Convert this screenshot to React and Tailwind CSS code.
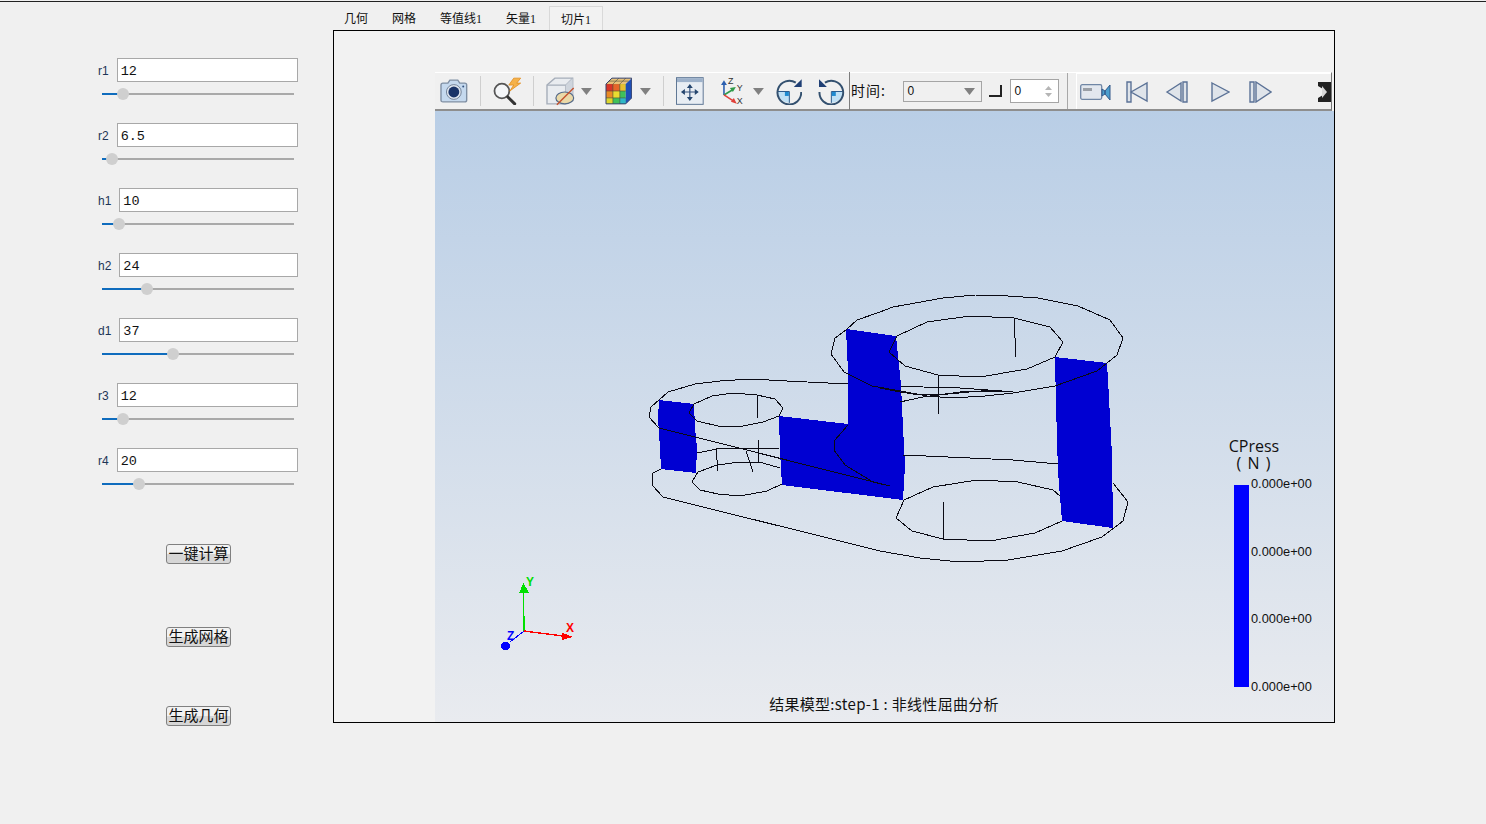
const params = [
  { label: 'r1', value: '12', pos: 21 },
  { label: 'r2', value: '6.5', pos: 10 },
  { label: 'h1', value: '10', pos: 17 },
  { label: 'h2', value: '24', pos: 45 },
  { label: 'd1', value: '37', pos: 71 },
  { label: 'r3', value: '12', pos: 21 },
  { label: 'r4', value: '20', pos: 37 },
]

const tabs = ['几何', '网格', '等值线1', '矢量1', '切片1']

const outlines = [
  // upper ring, outer
  '848,374 872,386 901,391 927,396 952,398 985,396 1013,393 1055,386 1097,371 1107,363 1117,355 1123,338 1110,320 1078,306 1038,298 1008,296 975,295 943,298 893,307 880,312 857,320 846,330 835,338 831,354 844,372 848,374',
  // upper ring, inner
  '897,336 889,352 905,366 938,375 980,377 1027,369 1055,357 1063,342 1050,327 1014,318 970,316 927,322 897,336',
  '1014,318 1016,357',
  '938,375 939,414',
  '901,386 923,387 960,388 1002,391',
  '880,388 900,392 913,394 938,395 980,391 1013,392',
  '900,402 923,397 960,392 1002,390',
  '903,455 948,457 1013,460 1058,464',
  // lower ring
  '904,500 896,518 912,531 943,539 990,541 1035,533 1062,521',
  '904,500 933,487 977,480 1018,482 1053,490 1060,496',
  '943,501 944,539',
  '1113,483 1128,502 1123,521 1102,537 1062,551 1008,560 960,562 920,558 880,551 663,497 652,485 653,473 661,469',
  // small boss
  '659,400 651,407 649,417 659,428 890,486',
  '659,400 668,392 695,384 720,381 750,379 787,381 848,384',
  '694,404 689,413 697,421 722,427 743,426 763,422 779,416 783,408 775,399 757,395 733,393 712,396 694,404',
  '757,395 757,418',
  '692,482 700,490 718,494 740,496 767,491 782,484',
  '692,482 698,472 717,465 740,462 763,463 780,468',
  '697,453 717,449 747,448 779,449',
  '716,448 718,471',
  '758,440 759,463',
  '746,451 753,472',
  '848,425 835,440 834,450 845,465 873,482 890,486',
]

const sections = [
  '659,400 694,404 695,428 697,448 696,473 661,469 660,448 658,418',
  '779,416 848,424 848,372 846,329 896,336 901,385 903,428 905,465 903,500 782,485 780,452',
  '1055,357 1107,363 1109,398 1112,455 1113,528 1062,521 1058,472 1056,405',
]

function ParamRow({ label, value, pos }) {
  return (
    <div className="flex flex-col">
      <div className="flex items-center gap-2">
        <span className="mt-[2px] text-[12px] leading-none text-[#1d3557] font-['Liberation_Sans',sans-serif]">{label}</span>
        <input
          readOnly
          value={value}
          className="h-6 flex-1 min-w-0 border border-[#a8a8a8] bg-white pl-[3px] pt-[2px] text-[13.5px] text-[#111] outline-none font-['Liberation_Mono',monospace]"
        />
      </div>
      <div className="relative ml-1 mt-[6px] flex h-3 w-[192px] items-center">
        <div className="h-[2px] w-full bg-[#a9a9a9]" />
        <div className="absolute left-0 h-[2px] bg-[#0f6cbd]" style={{ width: pos }} />
        <div className="absolute h-3 w-3 rounded-full bg-[#cfcfcf]" style={{ left: pos - 6 }} />
      </div>
    </div>
  )
}

function ActionButton({ children, className }) {
  return (
    <button className={`flex h-5 w-[65px] items-center justify-center rounded-[3px] border border-[#808080] bg-[linear-gradient(#f2f2f2_50%,#d6d6d6_50%)] pb-[3px] text-[15px] leading-none whitespace-nowrap text-[#111] font-['Noto_Sans_CJK_SC',sans-serif] ${className}`}>
      {children}
    </button>
  )
}

function Sep({ className }) {
  return <div className={`h-[30px] w-px bg-[#cfcfcf] ${className}`} />
}

function Caret({ className }) {
  return (
    <svg width="11" height="7" viewBox="0 0 11 7" className={className}>
      <path d="M0 0H11L5.5 7Z" fill="#808080" />
    </svg>
  )
}

function CameraIcon() {
  return (
    <svg width="28" height="24" viewBox="0 0 28 24" className="ml-[5px]">
      <path d="M1 6Q1 4 3 4H8L10 1H18L20 4H25Q27 4 27 6V21Q27 23 25 23H3Q1 23 1 21Z" fill="#c5d9ee" stroke="#7f8fa3" strokeWidth="1.4" />
      <circle cx="14" cy="13" r="7.5" fill="#dfe6ee" stroke="#75859a" />
      <circle cx="14" cy="13" r="5.5" fill="#1a3468" />
      <circle cx="23.5" cy="7.5" r="1" fill="#33527f" />
    </svg>
  )
}

function ZoomBoltIcon() {
  return (
    <svg width="30" height="28" viewBox="0 0 30 28" className="ml-3">
      <circle cx="9" cy="14" r="7.5" fill="#f4f6f8" stroke="#555" strokeWidth="1.8" />
      <path d="M15 20L22 27" stroke="#333" strokeWidth="3" strokeLinecap="round" />
      <path d="M21 1H28L24 6H28L17 14L21 8H16Z" fill="#f5b24a" stroke="#e08a1a" strokeWidth=".8" />
    </svg>
  )
}

function ClipCubeIcon() {
  return (
    <svg width="32" height="29" viewBox="0 0 32 29" className="ml-3">
      <path d="M1 8L9 1H27V20L20 27H1Z" fill="#e9ecf0" stroke="#a5adb9" strokeWidth="1.4" />
      <path d="M1 8H20V27M20 8L27 1" fill="none" stroke="#a5adb9" strokeWidth="1.2" />
      <path d="M20 8L27 1V20L20 27Z" fill="#cfd5dd" />
      <ellipse cx="19" cy="21" rx="9" ry="6" fill="#ead9a8" stroke="#556a88" strokeWidth="1.2" />
      <path d="M11 28L28 11" stroke="#c4502c" strokeWidth="1.4" />
    </svg>
  )
}

function ColorCubeIcon() {
  return (
    <svg width="28" height="28" viewBox="0 0 28 28" className="ml-[13px]">
      <path d="M7 1H27L21 7H1Z" fill="#e8c27a" />
      <path d="M1 7H21V27H1Z" fill="#3fc05a" />
      <path d="M1 7H8V14H1Z" fill="#d8352a" />
      <path d="M8 7H15V14H8Z" fill="#e6662a" />
      <path d="M15 7H21V14H15Z" fill="#e9c02f" />
      <path d="M1 14H8V21H1Z" fill="#ea8a25" />
      <path d="M8 14H15V21H8Z" fill="#e9dc30" />
      <path d="M1 21H8V27H1Z" fill="#dcd62f" />
      <path d="M15 21H21V27H15Z" fill="#2fb7c7" />
      <path d="M21 7L27 1V21L21 27Z" fill="#1f4fb5" />
      <path d="M8 7V27M15 7V27M1 14H21M1 21H21M7 1L1 7M14 1L8 7M21 1L15 7M4 4H24" stroke="#4c4c3c" strokeWidth=".6" fill="none" />
      <path d="M7 1H27V21L21 27H1V7Z" fill="none" stroke="#33406b" strokeWidth="1" />
    </svg>
  )
}

function FitIcon() {
  return (
    <svg width="28" height="28" viewBox="0 0 28 28" className="ml-3">
      <rect x=".5" y=".5" width="27" height="27" fill="#e8edf3" stroke="#5f7795" />
      <rect x="1" y="1" width="26" height="4" fill="#9db1ca" />
      <path d="M14 8V23M7 15H21" stroke="#33517c" strokeWidth="1.2" />
      <path d="M14 7L11 11H17ZM14 24L11 20H17ZM5 15L9 12V18ZM23 15L19 12V18Z" fill="#25466f" />
    </svg>
  )
}

function AxesIcon() {
  return (
    <svg width="24" height="30" viewBox="0 0 24 30" className="ml-[17px] font-['Liberation_Sans',sans-serif]">
      <path d="M3 19V6" stroke="#2b5fb0" strokeWidth="1.6" />
      <path d="M3 4L0 9H6Z" fill="#2b5fb0" />
      <path d="M3 19L13 13" stroke="#2f9b49" strokeWidth="1.6" />
      <path d="M15 11L9 12L12 16Z" fill="#2f9b49" />
      <path d="M3 19L14 26" stroke="#e0403a" strokeWidth="1.6" />
      <path d="M16 28L10 26L13 22Z" fill="#e0403a" />
      <text x="7" y="8" fontSize="9" fill="#333">Z</text>
      <text x="16" y="15" fontSize="9" fill="#333">Y</text>
      <text x="16" y="28" fontSize="9" fill="#333">X</text>
    </svg>
  )
}

function RotateIcon({ flip, className }) {
  return (
    <svg width="27" height="27" viewBox="0 0 27 27" className={`${flip ? '-scale-x-100' : ''} ${className}`}>
      <path d="M13.5 13.5H2A11.5 11.5 0 0 0 13.5 25Z" fill="#bfe0f5" />
      <path d="M13.5 13.5H2M13.5 13.5V25" stroke="#2a5a8c" strokeWidth="1" />
      <rect x="9" y="14" width="4" height="4" fill="#1e8ad0" />
      <path d="M20 4.5A12 12 0 1 0 25.5 14" fill="none" stroke="#33506f" strokeWidth="2" />
      <path d="M26 1V9H18Z" fill="#1f3f75" />
    </svg>
  )
}

function Transport({ d, width = 24, className }) {
  return (
    <svg width={width} height="22" viewBox={`0 0 ${width} 22`} className={className}>
      <path d={d} fill="#dfe4ea" stroke="#5b7296" strokeWidth="1.4" />
    </svg>
  )
}

function Toolbar() {
  return (
    <div className="flex h-[39px] w-[897px] shrink-0 items-center border-t border-white border-b-2 border-b-[#8e8e8e] border-r border-r-[#777] bg-[#f0f0f0] text-[#111] font-['Noto_Sans_CJK_SC',sans-serif]">
      <CameraIcon />
      <Sep className="ml-[12px]" />
      <ZoomBoltIcon />
      <Sep className="ml-[11px]" />
      <ClipCubeIcon />
      <Caret className="ml-[3px]" />
      <ColorCubeIcon />
      <Caret className="ml-2" />
      <Sep className="ml-3" />
      <FitIcon />
      <AxesIcon />
      <Caret className="ml-[8px]" />
      <RotateIcon className="ml-[12px]" />
      <RotateIcon flip className="ml-[16px]" />
      <div className="ml-[4px] h-[38px] w-px bg-[#7d7d7d]" />
      <span className="ml-[1px] w-[37px] pb-[2px] text-[14px] leading-none tracking-[1px] whitespace-nowrap">时间:</span>
      <div className="ml-[15px] flex h-[21px] w-[80px] items-center justify-between border border-[#a5a5a5] bg-[#f0f0f0] pl-[4px] pr-[6px] text-[12px] font-['Liberation_Sans',sans-serif]">
        0
        <Caret />
      </div>
      <div className="mb-[2px] ml-[7px] h-[12px] w-[13px] translate-y-[1px] self-center border-r-2 border-b-2 border-[#222]" />
      <div className="relative ml-[8px] flex h-6 w-[50px] items-center border border-[#a5a5a5] bg-white pl-[4px] text-[12px] font-['Liberation_Sans',sans-serif]">
        0
        <svg width="7" height="13" viewBox="0 0 7 13" className="absolute right-[6px]">
          <path d="M3.5 1L7 5H0ZM3.5 12L0 8H7Z" fill="#b5b5b5" />
        </svg>
      </div>
      <div className="ml-2 h-[36px] w-px bg-[#a8a8a8]" />
      <div className="ml-2 flex h-[36px] flex-1 items-center border-t border-l border-white pl-[3px]">
        <svg width="31" height="18" viewBox="0 0 31 18">
          <rect x=".7" y="1.7" width="21" height="14.6" rx="1.5" fill="#e2e7ee" stroke="#6f86a5" strokeWidth="1.3" />
          <rect x="3" y="5" width="9" height="3" fill="#9a9fa6" />
          <path d="M22 6L25 8V11L22 13ZM25 8L30 2V17L25 11Z" fill="#4b9fce" stroke="#34598a" />
        </svg>
        <Transport className="ml-[14px]" d="M2 1H6V21H2ZM6 11L22 2V20Z" />
        <Transport className="ml-[16px]" d="M2 11L16 2V20ZM18 1H22V21H18Z" />
        <Transport className="ml-[21px]" width={20} d="M2 2L19 11L2 20Z" />
        <Transport className="ml-[18px]" d="M2 1H6V21H2ZM8 1L23 11L8 21Z" />
        <svg width="13" height="20" viewBox="0 0 13 20" className="ml-[46px]">
          <path d="M0 0H13V20H0V16L5 13V7L0 4Z" fill="#222" />
          <path d="M4 4L9 10L4 16Z" fill="#d8d8d8" />
        </svg>
      </div>
    </div>
  )
}

function ModelView() {
  return (
    <div className="relative flex-1 bg-[linear-gradient(#b9cee6,#e9ebef)]">
      <svg className="absolute inset-0 h-full w-full font-['Liberation_Sans',sans-serif]" viewBox="435 111 899 611" shapeRendering="crispEdges">
        {sections.map((points) => (
          <polygon key={points} points={points} fill="#0000d2" />
        ))}
        {outlines.map((points) => (
          <polyline key={points} points={points} fill="none" stroke="#0a0a14" strokeWidth="1" strokeLinejoin="round" />
        ))}
        {/* triad */}
        <path d="M524 631L523.5 590" stroke="#00e000" strokeWidth="1.4" />
        <path d="M523.5 583L519 593H529Z" fill="#00e000" />
        <path d="M524 631L563 636" stroke="#ff0000" strokeWidth="1.4" />
        <path d="M573 637L562 632.5V640Z" fill="#ff0000" />
        <path d="M524 631L510 642" stroke="#0000ff" strokeWidth="1" />
        <ellipse cx="505.5" cy="646" rx="5" ry="4" fill="#0000ff" />
        <text x="526" y="586" fontSize="12" fontWeight="700" fill="#00e000">Y</text>
        <text x="566" y="632" fontSize="12" fontWeight="700" fill="#ff0000">X</text>
        <text x="507" y="640" fontSize="12" fontWeight="700" fill="#0000ff">Z</text>
      </svg>

      {/* legend */}
      <div className="absolute left-[794px] top-[328px] flex w-[50px] flex-col items-center gap-[3px] text-[16px] leading-[14px] text-[#111] font-['Open_Sans',sans-serif]">
        <span>CPress</span>
        <span className="whitespace-nowrap tracking-[1px]">( N )</span>
      </div>
      <div className="absolute left-[799px] top-[374px] h-[202px] w-[15px] bg-[#0000ff]" />
      <div className="absolute left-[816px] top-[365px] flex h-[219px] flex-col justify-between text-[12.8px] leading-4 text-[#111] font-['Liberation_Sans',sans-serif]">
        <span>0.000e+00</span>
        <span>0.000e+00</span>
        <span>0.000e+00</span>
        <span>0.000e+00</span>
      </div>
      <div className="absolute bottom-[9px] left-0 right-0 pr-[1px] text-center text-[15px] leading-[18px] tracking-[.3px] text-[#111] font-['Noto_Sans_CJK_SC',sans-serif]">
        结果模型:step-1 : 非线性屈曲分析
      </div>
    </div>
  )
}

export default function App() {
  return (
    <div className="h-[824px] w-[1486px] overflow-hidden bg-[#f0f0f0]">
      <div className="h-[2px] border-b border-[#222]" />
      <div className="flex">
        <aside className="flex w-[333px] shrink-0 flex-col pt-[56px]">
          <div className="ml-[98px] flex w-[200px] flex-col gap-[23px]">
            {params.map((p) => (
              <ParamRow key={p.label} {...p} />
            ))}
          </div>
          <div className="ml-[166px] flex flex-col items-start">
            <ActionButton className="mt-[54px]">一键计算</ActionButton>
            <ActionButton className="mt-[63px]">生成网格</ActionButton>
            <ActionButton className="mt-[59px]">生成几何</ActionButton>
          </div>
        </aside>
        <main className="flex flex-col">
          <div className="-ml-px flex h-[28px] items-end text-[12px] leading-none text-[#111] font-['Liberation_Serif','Noto_Sans_CJK_SC',sans-serif]">
            {tabs.map((tab, i) => (
              <div
                key={tab}
                className={
                  i === 4
                    ? 'ml-px flex h-6 items-center border border-b-0 border-[#d9d9d9] bg-[#f2f2f2] px-[11px] pt-[2px]'
                    : 'flex h-6 items-center px-3 pt-[2px]'
                }
              >
                {tab}
              </div>
            ))}
          </div>
          <div className="flex h-[693px] w-[1002px] flex-col border border-black bg-[#f2f2f2] pt-[41px] pl-[101px]">
            <Toolbar />
            <ModelView />
          </div>
        </main>
      </div>
    </div>
  )
}
